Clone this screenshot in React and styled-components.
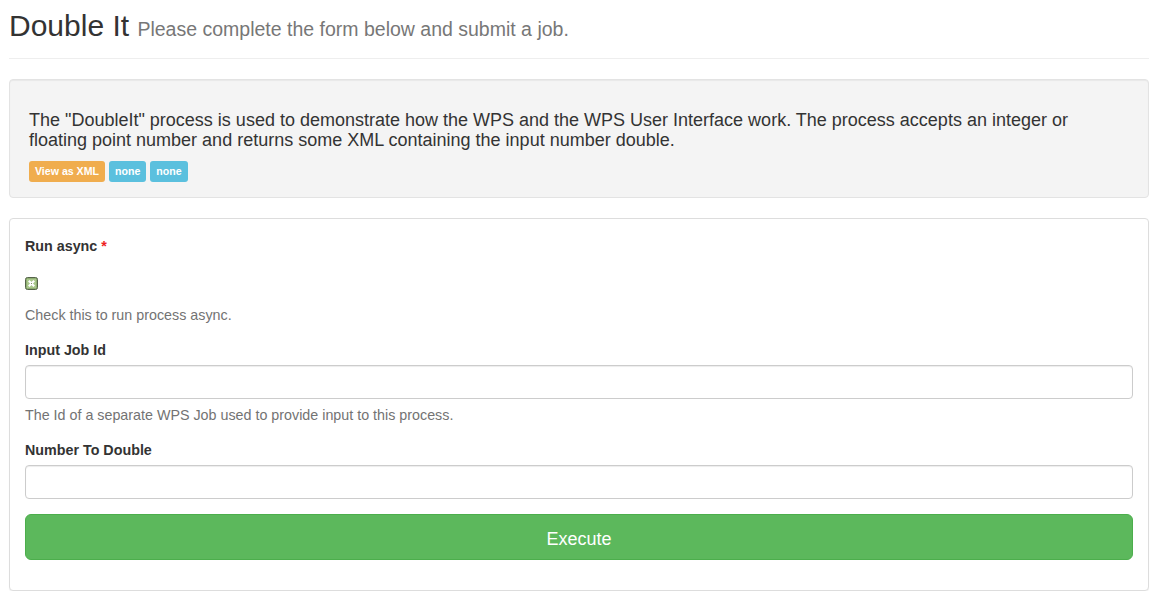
import React from "react";
import styled, { createGlobalStyle } from "styled-components";

const Global = createGlobalStyle`
  html, body { margin: 0; padding: 0; background: #fff; }
  body {
    font-family: "Liberation Sans", Arial, Helvetica, sans-serif;
    font-size: 14px;
    line-height: 1.42857;
    color: #333;
  }
  * { box-sizing: border-box; }
`;

const Page = styled.div`
  width: 1140px;
  margin-left: 9px;
`;

const PageHeader = styled.header`
  padding-bottom: 9px;
  margin: 0 0 20px;
  border-bottom: 1px solid #eee;
`;

const Title = styled.h2`
  margin: 9px 0 7px;
  font-size: 30px;
  font-weight: 500;
  line-height: 1.1;
  color: #333;
`;

const Subtitle = styled.small`
  font-size: 65%;
  font-weight: 400;
  color: #777;
`;

const Well = styled.section`
  background: #f4f4f4;
  border: 1px solid #e3e3e3;
  border-radius: 4px;
  padding: 19px 19px 15px;
  margin-bottom: 20px;
  box-shadow: inset 0 1px 1px rgba(0, 0, 0, 0.05);
`;

const Description = styled.h4`
  margin: 12px 0 10px;
  font-size: 18px;
  font-weight: 500;
  line-height: 1.1;
  color: #333;
`;

const BadgeRow = styled.div`
  display: flex;
  gap: 4px;
`;

const Badge = styled.span`
  display: inline-block;
  height: 21px;
  padding: 0 6px;
  font-size: 10.6px;
  font-weight: 700;
  line-height: 21px;
  color: #fff;
  border-radius: 3px;
  background: ${(p) => (p.$kind === "warning" ? "#f0ad4e" : "#5bc0de")};
`;

const Panel = styled.section`
  border: 1px solid #ddd;
  border-radius: 4px;
  padding: 17px 15px 15px;
  box-shadow: 0 1px 1px rgba(0, 0, 0, 0.05);
  background: #fff;
  font-size: 14.3px;
`;

const FormGroup = styled.div`
  margin-bottom: 15px;
`;

const Label = styled.label`
  display: block;
  font-weight: 700;
  margin-bottom: 5px;
  line-height: 20px;
`;

const Required = styled.span`
  color: #e22;
  margin-left: 4px;
`;

const CheckRow = styled.div`
  height: 39px;
  padding-top: 16px;
`;

const Help = styled.p`
  margin: ${(p) => (p.$tight ? "6px" : "5px")} 0 0;
  color: #737373;
  line-height: 20px;
`;

const Input = styled.input`
  display: block;
  width: 100%;
  height: 34px;
  padding: 6px 12px;
  font-size: 14px;
  font-family: inherit;
  color: #555;
  background: #fff;
  border: 1px solid #ccc;
  border-radius: 4px;
  box-shadow: inset 0 1px 1px rgba(0, 0, 0, 0.075);
  outline: none;
`;

const ExecuteButton = styled.button`
  display: block;
  width: 100%;
  height: 46px;
  padding: 12px 16px 8px;
  font-family: inherit;
  font-size: 18px;
  line-height: 24px;
  color: #fff;
  background: #5cb85c;
  border: 1px solid #4cae4c;
  border-radius: 6px;
  cursor: pointer;
`;

const CheckIcon = () => (
  <svg width="13" height="13" viewBox="0 0 13 13" style={{ display: "block" }}>
    <rect x="0.5" y="0.5" width="12" height="12" rx="2" fill="#8fae72" stroke="#55634a" />
    <rect x="2" y="2" width="9" height="9" fill="#a9c78c" />
    <path d="M3.8 3.8 L9.2 9.2 M9.2 3.8 L3.8 9.2" stroke="#fff" strokeWidth="2.2" />
    <rect x="6" y="6" width="1" height="1" fill="#7d8d6e" />
  </svg>
);

export default function App() {
  return (
    <>
      <Global />
      <Page>
        <PageHeader>
          <Title>
            Double It <Subtitle>Please complete the form below and submit a job.</Subtitle>
          </Title>
        </PageHeader>

        <Well>
          <Description>
            The "DoubleIt" process is used to demonstrate how the WPS and the WPS User Interface
            work. The process accepts an integer or floating point number and returns some XML
            containing the input number double.
          </Description>
          <BadgeRow>
            <Badge $kind="warning">View as XML</Badge>
            <Badge $kind="info">none</Badge>
            <Badge $kind="info">none</Badge>
          </BadgeRow>
        </Well>

        <Panel>
          <FormGroup>
            <Label>
              Run async<Required>*</Required>
            </Label>
            <CheckRow>
              <CheckIcon />
            </CheckRow>
            <Help>Check this to run process async.</Help>
          </FormGroup>

          <FormGroup>
            <Label>Input Job Id</Label>
            <Input type="text" />
            <Help $tight>The Id of a separate WPS Job used to provide input to this process.</Help>
          </FormGroup>

          <FormGroup>
            <Label>Number To Double</Label>
            <Input type="text" />
          </FormGroup>

          <FormGroup>
            <ExecuteButton type="button">Execute</ExecuteButton>
          </FormGroup>
        </Panel>
      </Page>
    </>
  );
}
